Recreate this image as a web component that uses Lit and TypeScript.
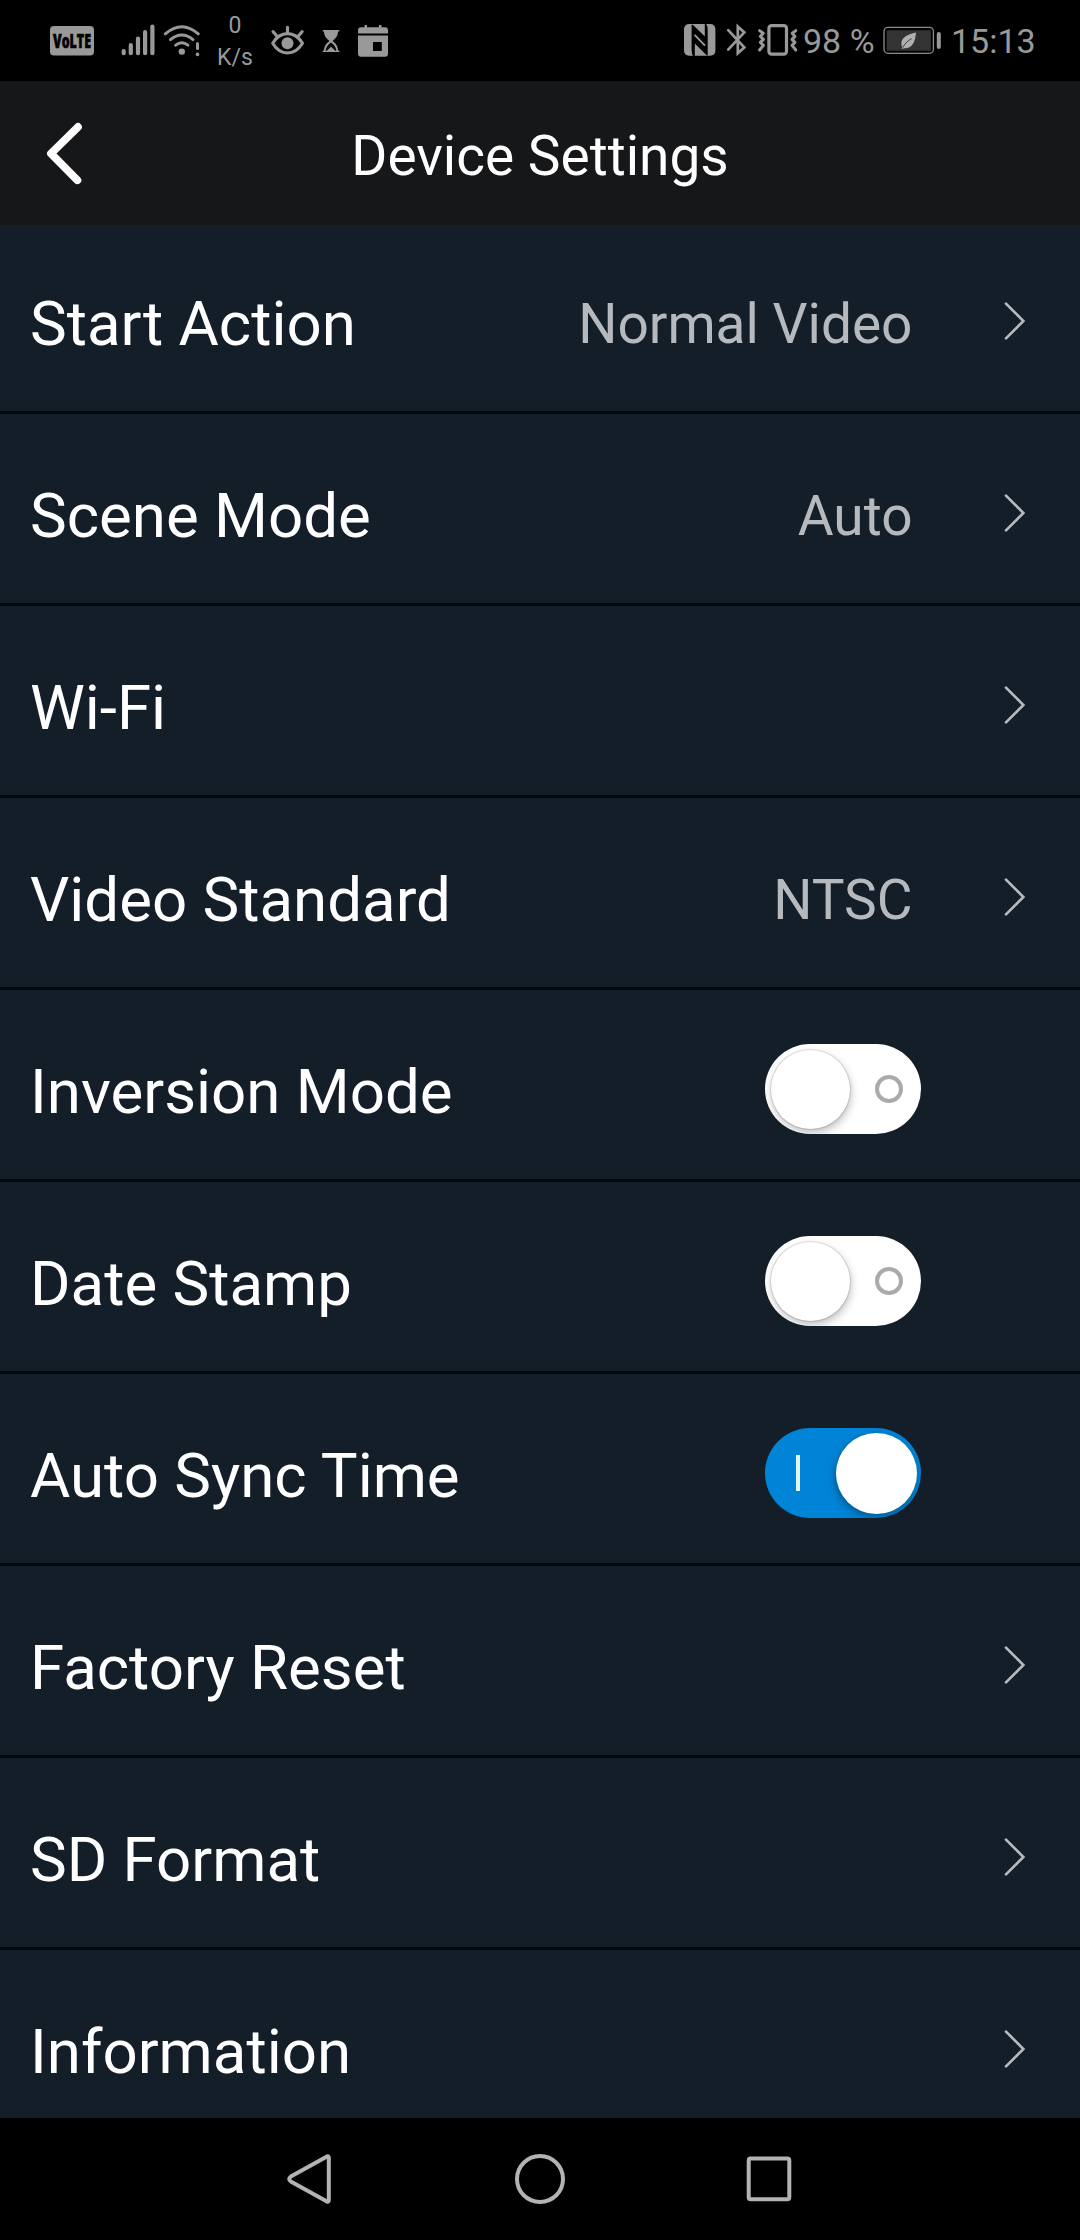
import { LitElement, html, css, svg, nothing } from "lit";
import { customElement, property } from "lit/decorators.js";

type Row = { label: string; value?: string; toggle?: boolean };

const ROWS: Row[] = [
  { label: "Start Action", value: "Normal Video" },
  { label: "Scene Mode", value: "Auto" },
  { label: "Wi-Fi" },
  { label: "Video Standard", value: "NTSC" },
  { label: "Inversion Mode", toggle: false },
  { label: "Date Stamp", toggle: false },
  { label: "Auto Sync Time", toggle: true },
  { label: "Factory Reset" },
  { label: "SD Format" },
  { label: "Information" },
];

/* Status icons share one coordinate space: each spans the bar's full height
   and shows the slice of it that starts at x and is w wide. */
const slice = (x: number, w: number, body: unknown) => html`
  <svg width=${w} height="81" viewBox="${x} 0 ${w} 81" fill="none">${body}</svg>
`;

const G = "#999999";

@customElement("status-bar")
export class StatusBar extends LitElement {
  static styles = css`
    :host {
      display: flex;
      justify-content: space-between;
      height: 81px;
      background: #000;
      color: #999;
      font-family: Roboto, "Liberation Sans", sans-serif;
    }
    .side {
      display: flex;
      align-items: flex-start;
    }
    .left {
      padding-left: 48px;
    }
    svg {
      display: block;
      flex: none;
    }
    .rate {
      width: 60px;
      padding-top: 10px;
      font-size: 23px;
      line-height: 32px;
      text-align: center;
    }
    .text {
      box-sizing: border-box;
      font-size: 34px;
      line-height: 82px;
      white-space: nowrap;
    }
    .percent {
      width: 79px;
      padding-left: 2px;
    }
    .time {
      width: 129px;
    }
    .volte {
      font-family: "Open Sans", Roboto, sans-serif;
      font-weight: 800;
      font-size: 18.5px;
    }
  `;

  render() {
    return html`
      <div class="side left">
        ${slice(48, 72, svg`
          <rect x="50" y="26" width="44" height="29.5" rx="4" fill=${G} />
          <text class="volte" x="53" y="47.7" textLength="38" lengthAdjust="spacingAndGlyphs" fill="#000" stroke="#000" stroke-width="0.6">VoLTE</text>`)}
        ${slice(120, 40, svg`
          <g stroke=${G} stroke-width="4.2" stroke-linecap="round">
            <path d="M123.7 51.2V53.2M130.8 45.2V53.2M138 38.6V53.2M145.1 32.2V53.2M152.4 26.6V53.2" />
          </g>`)}
        ${slice(160, 45, svg`
          <g stroke=${G} stroke-width="3" stroke-linecap="round">
            <path d="M165.3 33.8Q181.8 19.6 198.3 33.8M170.5 39.6Q181.8 30.4 193 39.6M175.7 45.2Q181.8 40.2 187.9 45.2" />
            <path d="M197.5 43.6V48.6" />
          </g>
          <circle cx="181.8" cy="51.6" r="3.2" fill=${G} />
          <circle cx="197.5" cy="54.4" r="1.8" fill=${G} />`)}
        <div class="rate">0<br />K/s</div>
        ${slice(265, 50, svg`
          <g stroke=${G} stroke-width="3.1" stroke-linecap="round" stroke-linejoin="round">
            <path d="M272.7 43.2C280.5 30.4 294.5 30.4 302.5 43.2C294.5 56.2 280.5 56.2 272.7 43.2Z" />
            <path d="M287.5 27.2V32.5M273 31.6L277.4 36.8M302.2 31.6L297.8 36.8" />
          </g>
          <circle cx="287.5" cy="43.2" r="6" fill=${G} />`)}
        ${slice(315, 35, svg`
          <path fill=${G} d="M322.7 30H339.3V31.6H338C338 36 335.5 38.8 332.6 41C335.5 43.4 338 46 338 50.4H339.3V52H322.7V50.4H324C324 46 326.5 43.4 329.4 41C326.5 38.8 324 36 324 31.6H322.7Z" />
          <path fill="#000" d="M325.7 50.4C325.9 47 328 44.8 331 42.4C334 44.8 336.1 47 336.3 50.4L331 45.4Z" />
          <path stroke="#000" stroke-width="1.1" d="M326 50.6L331 46.2L336 50.6" />`)}
        ${slice(350, 45, svg`
          <path fill=${G} d="M361 27.3H364.5V25H367V27.3H379V25H381.5V27.3H385A3 3 0 0 1 388 30.3V33.6H358V30.3A3 3 0 0 1 361 27.3Z" />
          <path fill=${G} fill-rule="evenodd" d="M358 35.4H388V53.7A3 3 0 0 1 385 56.7H361A3 3 0 0 1 358 53.7ZM373 42V51H381.8V42Z" />`)}
      </div>
      <div class="side">
        ${slice(680, 40, svg`
          <rect x="684" y="24" width="31.4" height="31.8" rx="5" fill=${G} />
          <path fill="#000" d="M691.6 24.6L693.6 25.4L704.8 36.6V24H706.2Q707.7 26 707.7 30V55.6L706.4 55L694.8 43.6V56H693.2Q691.6 54 691.6 50Z" />
          <path stroke=${G} stroke-width="1.9" d="M694.6 34.8L705 45.6" />`)}
        ${slice(720, 35, svg`
          <path stroke=${G} stroke-width="2.7" stroke-linecap="round" stroke-linejoin="miter" d="M728.2 30.2L744.3 47.4L737.8 53.2V26.6L744.3 32.4L728.2 49.6" />`)}
        ${slice(755, 46, svg`
          <rect x="768.9" y="25.6" width="17.6" height="28.6" rx="2.6" stroke=${G} stroke-width="3.2" />
          <path stroke=${G} stroke-width="3" stroke-linecap="round" stroke-linejoin="round" d="M759.6 30.6L763.2 33.2L760.4 36.4L763.4 39.4L760.4 42.4L763.4 45.4L759.6 50" />
          <path stroke=${G} stroke-width="3" stroke-linecap="round" stroke-linejoin="round" d="M795.8 30.6L792.2 33.2L795 36.4L792 39.4L795 42.4L792 45.4L795.8 50" />`)}
        <div class="text percent">98 %</div>
        ${slice(880, 71, svg`
          <rect x="884" y="27.3" width="49.4" height="26" rx="4" stroke="#8c8c8c" stroke-width="1.3" />
          <rect x="886.7" y="30.2" width="44.2" height="20.6" rx="1" fill="#333" />
          <rect x="936.8" y="32" width="4" height="17" rx="2" fill=${G} />
          <path fill="#b0b0b0" d="M916 32.6C907 34.6 901.6 38 901.4 43.2C901.3 44.8 901.7 46 902.3 47L901.7 48.4L903.1 48.9L903.6 48.2C910.6 49.3 915.4 43.6 916 32.6Z" />
          <path stroke="#333" stroke-width="0.9" d="M902.8 47.6C904.4 43.8 907.6 41.2 911.6 38.6" />`)}
        <div class="text time">15:13</div>
      </div>
    `;
  }
}

@customElement("toggle-switch")
export class ToggleSwitch extends LitElement {
  @property({ type: Boolean }) on = false;

  static styles = css`
    :host {
      display: block;
      width: 156px;
      height: 90px;
    }
    .track {
      box-sizing: border-box;
      display: flex;
      align-items: center;
      justify-content: space-between;
      height: 90px;
      padding: 0 18px 0 5.5px;
      border-radius: 45px;
      background: #fff;
      overflow: hidden;
    }
    .knob {
      width: 79px;
      height: 79px;
      border-radius: 50%;
      background: #fff;
      box-shadow: 0 0 1px 1px rgba(0, 0, 0, 0.12), 1px 4px 9px rgba(0, 0, 0, 0.26);
    }
    .ring {
      box-sizing: border-box;
      width: 28px;
      height: 28px;
      border: 4px solid #aaa;
      border-radius: 50%;
    }
    .on {
      background: #0084d8;
      padding: 0 4.5px 0 31px;
    }
    .on .knob {
      width: 81px;
      height: 81px;
      box-shadow: -1px 3px 9px rgba(0, 0, 0, 0.35);
    }
    .bar {
      width: 4px;
      height: 36px;
      background: #e3f3fc;
    }
  `;

  render() {
    return this.on
      ? html`<div class="track on"><div class="bar"></div><div class="knob"></div></div>`
      : html`<div class="track"><div class="knob"></div><div class="ring"></div></div>`;
  }
}

@customElement("app-root")
export class AppRoot extends LitElement {
  static styles = css`
    :host {
      display: flex;
      flex-direction: column;
      width: 1080px;
      height: 2240px;
      overflow: hidden;
      background: #141e29;
      color: #fff;
      font-family: Roboto, "Liberation Sans", sans-serif;
    }
    svg {
      display: block;
    }
    .header {
      flex: none;
      display: grid;
      grid-template-columns: 130px 1fr 130px;
      align-items: center;
      height: 144px;
      background: #161719;
    }
    .back {
      padding-left: 42px;
    }
    .title {
      padding-top: 6px;
      font-size: 55px;
      line-height: 70px;
      font-weight: 400;
      text-align: center;
      margin: 0;
    }
    .list {
      flex: 1;
      min-height: 0;
      overflow: hidden;
    }
    .row {
      box-sizing: border-box;
      display: flex;
      align-items: center;
      height: 192px;
      padding: 9px 0 0 30px;
      border-bottom: 3px solid #020911;
    }
    .row:first-child {
      height: 189px;
      padding-top: 6px;
    }
    .label {
      flex: 1;
      padding-top: 6px;
      font-size: 61.8px;
      line-height: 80px;
    }
    .value {
      padding: 6px 8.5px 0 0;
      font-size: 55px;
      line-height: 70px;
      color: #b6b9bd;
    }
    .trail {
      box-sizing: border-box;
      width: 159px;
      padding-left: 78px;
    }
    .nav {
      flex: none;
      display: flex;
      justify-content: center;
      align-items: center;
      gap: 169px;
      height: 122px;
      background: #000;
    }
  `;

  private row(r: Row) {
    const isToggle = r.toggle !== undefined;
    return html`
      <div class="row">
        <div class="label">${r.label}</div>
        ${r.value ? html`<div class="value">${r.value}</div>` : nothing}
        ${isToggle ? html`<toggle-switch ?on=${r.toggle}></toggle-switch>` : nothing}
        <div class="trail">
          ${isToggle
            ? nothing
            : html`<svg width="30" height="44" viewBox="0 0 30 44" fill="none">
                <path d="M6.2 3.8L24.4 22L6.2 40.2" stroke="#b6b9bd" stroke-width="2.6" />
              </svg>`}
        </div>
      </div>
    `;
  }

  render() {
    return html`
      <status-bar></status-bar>
      <div class="header">
        <div class="back">
          <svg width="46" height="70" viewBox="42 118 46 70" fill="none">
            <path d="M78 127L51 153.5L77.4 180.2" stroke="#fff" stroke-width="7.8" stroke-linecap="round" stroke-linejoin="round" />
          </svg>
        </div>
        <h1 class="title">Device Settings</h1>
      </div>
      <div class="list">${ROWS.map((r) => this.row(r))}</div>
      <div class="nav">
        <svg width="60" height="60" viewBox="280 2149 60 60" fill="none">
          <path d="M326 2156.4L289.8 2176.6Q286.6 2179 289.8 2181.4L326 2201.6Q327.8 2202.4 327.8 2200V2158Q327.8 2155.6 326 2156.4Z" stroke="#b3b3b3" stroke-width="4" stroke-linejoin="round" />
        </svg>
        <svg width="60" height="60" viewBox="510 2149 60 60" fill="none">
          <circle cx="540" cy="2179" r="23" stroke="#b3b3b3" stroke-width="4" />
        </svg>
        <svg width="60" height="60" viewBox="739 2149 60 60" fill="none">
          <rect x="748.7" y="2158.5" width="40.6" height="40.8" rx="2" stroke="#b3b3b3" stroke-width="4" />
        </svg>
      </div>
    `;
  }
}
